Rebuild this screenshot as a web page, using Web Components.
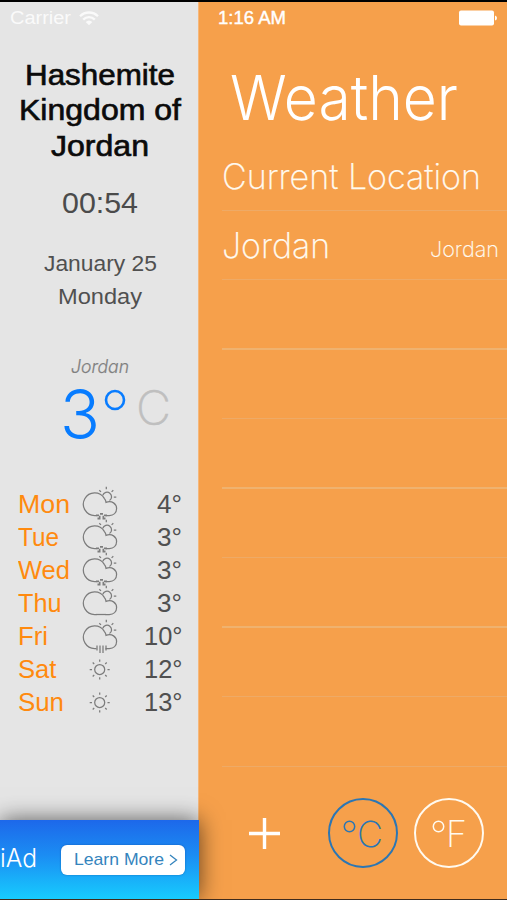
<!DOCTYPE html>
<html lang="en">
<head>
<meta charset="utf-8">
<title>Weather</title>
<style>
html,body{margin:0;height:100%;overflow:hidden}
</style>
</head>
<body>
<weather-app></weather-app>
<script>
function define(name, html) {
  const template = document.createElement('template');
  template.innerHTML = html;
  customElements.define(name, class extends HTMLElement {
    constructor() {
      super();
      this.attachShadow({mode: 'open'}).append(template.content.cloneNode(true));
    }
  });
}

/* One line of text, stretched so that it fills the width given in the "w" attribute. */
customElements.define('fit-text', class extends HTMLElement {
  constructor() {
    super();
    this.attachShadow({mode: 'open'}).innerHTML =
      '<style>:host{display:block;white-space:nowrap}b{display:inline-block;font-weight:inherit;text-align:left;vertical-align:top}span{display:inline-block;transform-origin:0 50%;vertical-align:top}</style><b><span></span></b>';
  }
  connectedCallback() {
    const span = this.shadowRoot.querySelector('span');
    span.textContent = this.getAttribute('text');
    const want = parseFloat(this.getAttribute('w'));
    if (!want) return;
    const scale = want / span.getBoundingClientRect().width;
    span.parentNode.style.width = want + 'px';
    span.style.transform = `scaleX(${scale})`;
  }
});

/* Weather glyphs: kind = snow | cloud | rain | sun */
const cloud = `<path d="M14.500 33.500H12.700A11.300 11.300 0 1 1 22.300 16.300Q23.800 18 24 20.300C30 18.300 34.600 21.700 34.600 26.600C34.600 30.800 31.500 33.500 27.300 33.500H23.500"/>
<path d="M20.800 13.300A4.500 4.500 0 1 1 27.500 18.500"/>
<path d="M17.300 8.300L19 9.900M24.300 4.800V7.300M31.300 8.300L29.600 9.900M31.800 15.200H34.300"/>`;
const glyphs = {
  snow: cloud + '<path stroke-width="1.800" d="M14 33.300h3M22 33.300h3M18 31.800h3M15.500 36.500h3M20.500 36.500h3M17 34.700h1.500M20.500 34.700h1.500"/>',
  cloud: cloud + '<path d="M14 33.500H24"/>',
  rain: cloud + '<path d="M15 30.500V35.500M18 30.500V38M21 30.500V38M24 30.500V35.500"/>',
  sun: '<circle cx="17.700" cy="21.500" r="5"/><path d="M17.700 11.500V13.700M17.700 29.300V31.500M7.700 21.500H10M25.500 21.500H27.700M10.700 14.500L12.200 16M23.200 27L24.700 28.500M10.700 28.500L12.200 27M23.200 16L24.700 14.500"/>'
};
customElements.define('weather-glyph', class extends HTMLElement {
  constructor() {
    super();
    this.attachShadow({mode: 'open'}).innerHTML =
      `<style>:host{display:block;height:33.170px}svg{display:block;overflow:visible;margin-top:-5.600px}</style>
       <svg width="36" height="40" fill="none" stroke="#7c7c7c" stroke-width="1.250">${glyphs[this.getAttribute('kind')] || ''}</svg>`;
  }
});

customElements.define('forecast-row', class extends HTMLElement {
  constructor() {
    super();
    const a = n => this.getAttribute(n);
    this.attachShadow({mode: 'open'}).innerHTML = `<style>
      :host{display:grid;grid-template-columns:64.500px 40px 1fr;height:33.170px;line-height:33.170px;
        font-size:25px;padding:0 16px 0 17.500px;text-align:left}
      .d{color:#ff8a0f}.t{color:#505050;justify-self:end}
    </style><fit-text class="d" text="${a('day')}" w="${a('dw')}"></fit-text>
    <weather-glyph kind="${a('kind')}"></weather-glyph>
    <fit-text class="t" text="${a('temp')}" w="${a('tw')}"></fit-text>`;
  }
});

define('ad-banner', `<style>
  :host{display:flex;box-sizing:border-box;height:79px;width:199px;margin-top:auto;position:relative;z-index:2;
    background:linear-gradient(#1d68ea,#1b8df3 45%,#17ccfe);box-shadow:0 0 22px rgba(0,0,0,.62);align-items:center;color:#fff;text-align:left}
  .logo{font:300 25.500px/30px Inter,sans-serif;width:61px;box-sizing:border-box;margin-top:-3px}
  .more{width:124px;height:30px;box-sizing:border-box;background:#fff;border-radius:6px;padding-left:13px;
    display:flex;align-items:center;color:#3484bd;font-size:17px;line-height:30px;box-shadow:0 0 2px rgba(0,50,120,.5)}
  svg{margin-left:5px}
</style>
<fit-text class="logo" text="iAd" w="37"></fit-text>
<div class="more"><fit-text text="Learn More" w="90"></fit-text>
<svg width="9" height="12" fill="none" stroke="#3484bd" stroke-width="1.300"><path d="M1 1L7.500 6L1 11"/></svg></div>`);

define('side-panel', `<style>
  :host{display:flex;flex-direction:column;width:198px;background:#e5e5e5;text-align:center;position:relative;z-index:1;
   box-shadow:1px 0 0 #f6b77a}
  .status{height:32px;line-height:32px;display:flex;align-items:center;color:#fafafa;font-size:18px;padding-left:10px}
  .status svg{margin-left:8px}
  .name{color:#0b0b0b;-webkit-text-stroke:.65px #0b0b0b;font-size:29.500px;line-height:35.600px;margin-top:22.500px;padding-left:2px}
  .time{color:#4b4b4b;font-size:30px;line-height:40px;margin-top:19.400px;padding-left:2px}
  .date{color:#505050;font-size:22.500px;line-height:33.200px;margin-top:23.900px;margin-bottom:-.5px;padding-left:2px}
  .place{color:#808080;font:italic 300 18px/24px Inter,sans-serif;margin-top:42.500px;padding-left:1px;-webkit-text-stroke:.2px #808080}
  .now{display:flex;height:70.400px;align-items:flex-start;padding-left:60px;font-family:Inter,sans-serif;margin-bottom:38.200px}
  .n{color:#087cff;font-weight:300;font-size:68px;line-height:70.400px;width:44px;text-align:left}
  .now svg{margin-top:10.500px}
  .u{color:#bfbfbf;font-weight:250;font-size:47px;line-height:57px;margin-left:10px;-webkit-text-stroke:.5px #bfbfbf}
</style>
<div class="status"><fit-text text="Carrier" w="61"></fit-text>
<svg width="20" height="15" viewBox="0 0 20 15" fill="none" stroke="#fafafa" stroke-width="2.300"><path d="M1 5.300C6 .2 14 .2 19 5.300M4.200 8.600C7.500 5.300 12.500 5.300 15.800 8.600"/><path d="M10 14.300L6.700 11Q10 8 13.300 11Z" fill="#fafafa" stroke="none"/></svg></div>
<div class="name"><fit-text text="Hashemite" w="150"></fit-text><fit-text text="Kingdom of" w="162"></fit-text><fit-text text="Jordan" w="98"></fit-text></div>
<fit-text class="time" text="00:54" w="76"></fit-text>
<div class="date"><fit-text text="January 25" w="113"></fit-text><fit-text text="Monday" w="84"></fit-text></div>
<fit-text class="place" text="Jordan" w="58"></fit-text>
<div class="now"><fit-text class="n" text="3" w="40"></fit-text>
<svg width="22" height="22" fill="none" stroke="#087cff" stroke-width="2.600"><circle cx="11" cy="11" r="9"/></svg>
<fit-text class="u" text="C" w="35"></fit-text></div>
<forecast-row day="Mon" dw="52" kind="snow" temp="4°" tw="25"></forecast-row>
<forecast-row day="Tue" dw="41" kind="snow" temp="3°" tw="25"></forecast-row>
<forecast-row day="Wed" dw="52" kind="snow" temp="3°" tw="25"></forecast-row>
<forecast-row day="Thu" dw="43.500" kind="cloud" temp="3°" tw="25"></forecast-row>
<forecast-row day="Fri" dw="30" kind="rain" temp="10°" tw="38.500"></forecast-row>
<forecast-row day="Sat" dw="38.500" kind="sun" temp="12°" tw="38.500"></forecast-row>
<forecast-row day="Sun" dw="46" kind="sun" temp="13°" tw="38.500"></forecast-row>
<ad-banner></ad-banner>`);

define('location-row', `<style>
  :host{display:flex;box-sizing:border-box;height:69.500px;margin-left:24px;border-bottom:1.500px solid #eeaa66;
    align-items:center;justify-content:space-between;padding-right:8px}
  :host([bright]){border-bottom:2px solid #efb26f}
</style><slot></slot>`);

define('unit-button', `<style>
  :host{display:flex;box-sizing:border-box;width:70px;height:70px;border:2.500px solid;border-radius:50%;
    align-items:flex-start;padding-top:13.500px;font:250 36px/40px Inter,sans-serif}
  svg{flex:none;margin:6px 1px 0 13px}
  :host([wide]) svg{margin:6px 1px 0 16px}
</style>
<svg width="13" height="13" fill="none" stroke="currentColor" stroke-width="1.500"><circle cx="6.500" cy="6.500" r="5.200"/></svg><slot></slot>`);

define('location-list', `<style>
  :host{display:flex;flex-direction:column;width:309px;background:#f6a04b;color:#fffaf0;font-family:Inter,sans-serif;font-weight:250}
  .status{height:32px;display:flex;align-items:center;justify-content:space-between;padding:0 9px 0 20px;
    font:400 17.500px/32px "Liberation Sans",sans-serif;color:#fff;-webkit-text-stroke:.4px #fff}
  h1{margin:23.500px 0 3.500px 32px;font-size:62px;line-height:80px;font-weight:300;color:#fff}
  .big{font-size:35px;margin-top:1px;-webkit-text-stroke:.25px}.small{font-size:22px;margin-top:9px;-webkit-text-stroke:.15px}
  .bar{display:flex;align-items:center;margin-top:31.500px;padding-left:51px}
  .plus{margin-right:48px}.f{margin-left:16px;color:#fffaf0}.c{color:#2b76b4}
</style>
<div class="status"><fit-text text="1:16 AM" w="68"></fit-text>
<svg width="40" height="16" fill="#fff"><rect x="1" y=".5" width="35" height="15" rx="2"/><path d="M37 5.500Q39 6 39 8Q39 10 37 10.500Z"/></svg></div>
<h1><fit-text text="Weather" w="228"></fit-text></h1>
<location-row><fit-text class="big" text="Current Location" w="259"></fit-text></location-row>
<location-row><fit-text class="big" text="Jordan" w="108"></fit-text><fit-text class="small" text="Jordan" w="69"></fit-text></location-row>
<location-row bright></location-row><location-row></location-row><location-row bright></location-row>
<location-row></location-row><location-row bright></location-row><location-row></location-row><location-row></location-row>
<div class="bar"><svg class="plus" width="31" height="31" stroke="#fff" stroke-width="3.400"><path d="M0 15.500H31M15.500 0V31"/></svg>
<unit-button class="c"><fit-text text="C" w="26"></fit-text></unit-button>
<unit-button class="f" wide><fit-text text="F" w="21"></fit-text></unit-button></div>`);

define('weather-app', `<style>
  :host{display:flex;box-sizing:border-box;width:507px;height:900px;overflow:hidden;border-top:2px solid #000;
    border-bottom:1px solid #402c1c;font-family:"Liberation Sans",Arial,sans-serif;background:#f6a04b}
</style><side-panel></side-panel><location-list></location-list>`);
</script>
</body>
</html>
